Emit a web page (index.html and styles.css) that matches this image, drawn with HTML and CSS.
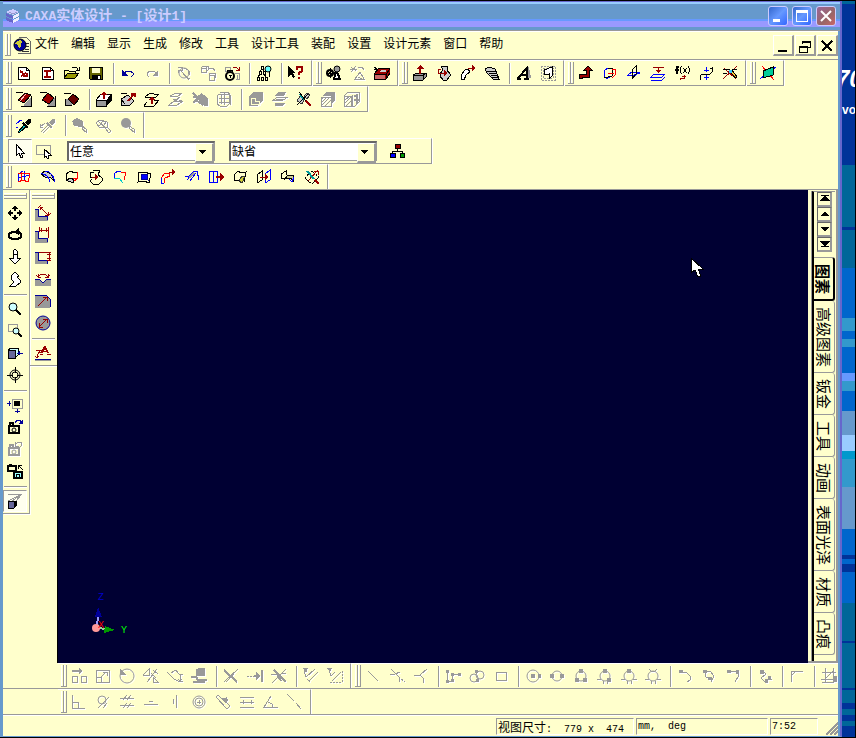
FILE: index.html
```html
<!DOCTYPE html>
<html lang="zh-CN">
<head>
<meta charset="utf-8">
<title>CAXA实体设计 - [设计1]</title>
<link rel="stylesheet" href="styles.css">
</head>
<body>
<div class="screen">
<main class="window">
  <header class="titlebar">
    <svg class="logo" viewBox="0 0 16 16"><path fill="#ccf" d="M1 4l7-3 6 3-6 3z"/><path fill="#66c" d="M1 5l7 3v3L1 8zM1 9l7 3v3l-7-3z"/><path fill="#eef" d="M8 8l6-3v3l-6 3zM8 12l6-3v3l-6 3z"/><path stroke="#99c" d="M4 4l4 2 4-2"/></svg>
    <h1>CAXA<span class="zh">实体设计</span> - [<span class="zh">设计</span>1]</h1>
    <button class="cap" aria-label="最小化"><svg viewBox="0 0 18 18"><path class="w" d="M4 12h7v3H4z"/></svg></button>
    <button class="cap" aria-label="最大化"><svg viewBox="0 0 18 18"><path class="w" fill-rule="evenodd" d="M3 3h12v12H3zM4 6v8h10V6z"/></svg></button>
    <button class="cap close" aria-label="关闭"><svg viewBox="0 0 18 18"><path class="wx" d="M4 4l10 10M14 4L4 14"/></svg></button>
  </header>

  <nav class="menubar">
    <i class="grip"></i>
    <svg class="docicon" viewBox="0 0 18 18"><path fill="#ffc" stroke="#666" d="M6 1h7l4 4v12H5"/><path stroke="#333" d="M12 7h4M13 10h3M12 13h4M9 15h7"/><circle cx="7" cy="9" r="6" fill="#009" stroke="#000"/><path fill="#cc3" d="M3 6l4-2 3 2-2 1v3l-2 3-1-4-3-1z"/></svg>
    <a href="#">文件</a><a href="#">编辑</a><a href="#">显示</a><a href="#">生成</a><a href="#">修改</a><a href="#">工具</a><a href="#">设计工具</a><a href="#">装配</a><a href="#">设置</a><a href="#">设计元素</a><a href="#">窗口</a><a href="#">帮助</a>
    <span class="mdi">
      <button aria-label="最小化文档"><svg viewBox="0 0 16 16"><path class="k2" d="M3 14h9"/></svg></button>
      <button aria-label="还原文档"><svg viewBox="0 0 16 16"><path class="k" d="M5 7V4h8v6h-3M5 5h8M2 9h8v6H2zM2 10h8"/></svg></button>
      <button aria-label="关闭文档"><svg viewBox="0 0 16 16"><path class="k2" d="M3 4l10 10M13 4L3 14"/></svg></button>
    </span>
  </nav>

  <div class="row">
    <div class="bar"><i class="grip"></i>
      <button aria-label="新建设计"><svg viewBox="0 0 16 16"><path fill="#fff" stroke="#000" d="M2 2h8l3 3v9H2z"/><path class="k" d="M10 2v3h3"/><path class="r2" d="M4 6l3 2M5 11l5-3M7 11h4V8"/></svg></button>
      <button aria-label="新建图纸"><svg viewBox="0 0 16 16"><path fill="#fff" stroke="#000" d="M2 2h8l3 3v9H2z"/><path class="k" d="M10 2v3h3"/><path class="r2" d="M4 6h7M4 12h7M7 6v6"/></svg></button>
      <button aria-label="打开"><svg viewBox="0 0 16 16"><path fill="#ff9" stroke="#000" d="M0 13V5h4l1 1h6v3"/><path fill="#990" stroke="#000" d="M0 13l4-5h11l-4 5z"/><path class="k" d="M8 3l2-1 3 1 1 2M12 5h3V2"/></svg></button>
      <button aria-label="保存"><svg viewBox="0 0 16 16"><path fill="#660" stroke="#000" d="M1 2h13v12H2l-1-1z"/><path fill="#ffc" d="M4 3h8v5H4z"/><path fill="#000" d="M4 10h9v4H4z"/><path fill="#fff" d="M10 11h2v3h-2z"/></svg></button>
      <i class="sep"></i>
      <button aria-label="撤消"><svg viewBox="0 0 16 16"><path class="b" d="M4 9l2-3h4l3 2v2l-2 2"/><path fill="#009" d="M2 5v6h6z"/></svg></button>
      <button class="off" aria-label="重做"><svg viewBox="0 0 16 16"><path class="g" d="M12 8l-2-2H6L3 8v2l2 2"/><path class="gf" d="M14 5v6H8z"/></svg></button>
      <i class="sep"></i>
      <button class="off" aria-label="更新"><svg viewBox="0 0 16 16"><path class="g" d="M2 2h4v3H2v3M8 3l4 2 1 4M13 6v4M5 6l8 9M10 12l4 2"/><circle class="g" cx="8" cy="8" r="5"/></svg></button>
      <button class="off" aria-label="复制零件"><svg viewBox="0 0 16 16"><path class="g" d="M1 3h5v4H1zM1 3l2-2h5l-2 2M6 7l2-2V1M9 10h5v5H9zM9 10l1-2h5v5M9 3h4l2 3"/></svg></button>
      <button aria-label="锁定零件"><svg viewBox="0 0 16 16"><path class="g" d="M1 2h5v4H1zM11 8h4v6h-3M13 10v4"/><path class="r" d="M9 2h3l3 3M12 5h3V2"/><circle cx="6" cy="11" r="4" fill="#ffc" stroke="#000" stroke-width="2"/><path class="k" d="M3 7V5h5v2M5 10h3M6 10v3"/></svg></button>
      <i class="sep"></i>
      <button aria-label="设计树"><svg viewBox="0 0 16 16"><path class="k" d="M5 1h2v3H5zM3 6h2v3H3zM7 6h2v3H7zM1 12h2v3H1zM5 12h2v3H5zM9 12h2v3H9zM6 4L4 6M6 4l2 2M4 9l-2 3M8 9l2 3M13 7l1 5"/><circle cx="12" cy="4" r="3" fill="#6ff" stroke="#000"/></svg></button>
      <i class="sep"></i>
      <button aria-label="帮助指针"><svg viewBox="0 0 16 16"><path fill="#000" d="M0 1v11l3-3 2 4 2-1-2-4h3z"/><path class="r2" d="M9 5V2h5v4l-3 2v2M11 12v2"/></svg></button>
    </div>
    <div class="bar"><i class="grip"></i>
      <button aria-label="装配"><svg viewBox="0 0 16 16"><circle cx="4" cy="8" r="3" class="k2"/><path class="k" d="M4 3v10M0 8h9M1 5l6 6M7 5l-6 6"/><path fill="#fff" stroke="#000" stroke-width="2" d="M10 5l4 9H8z"/><circle cx="11" cy="4" r="3" fill="#999" stroke="#000"/></svg></button>
      <button class="off" aria-label="解除装配"><svg viewBox="0 0 16 16"><path class="g" d="M1 2l5 4M6 1L1 7M0 4h7M8 3l4-1 2 3M10 7l4 7H5zM8 12l6 3"/></svg></button>
      <button aria-label="零件库"><svg viewBox="0 0 16 16"><path fill="#900" stroke="#000" d="M0 9l5-6h11v5l-4 6H0z"/><path fill="#c66" d="M1 10h10v4H1z"/><path class="k" d="M0 9h12v5M12 9l4-5M0 2l3 2-3 1"/><path fill="#ccc" d="M7 5h5v2H6z"/></svg></button>
    </div>
    <div class="bar"><i class="grip"></i>
      <button aria-label="拉伸"><svg viewBox="0 0 16 16"><path fill="#999" stroke="#000" d="M1 10l4-2h9v4l-3 3H1z"/><path class="k" d="M1 10h10v5M11 10l3-2"/><path class="r2" d="M8 9V3"/><path fill="#900" d="M8 0l4 4H4z"/></svg></button>
      <button aria-label="旋转"><svg viewBox="0 0 16 16"><path fill="#ccc" stroke="#000" d="M5 1h7l-1 4 3 4v2l-3 4H7l-3-4V9l3-4z"/><path class="r" d="M5 4H2v4h7"/><path fill="#900" d="M8 5l4 3-4 3z"/></svg></button>
      <button aria-label="扫描"><svg viewBox="0 0 16 16"><path fill="#fff" stroke="#000" d="M1 14v-4l4-5 3-1 2 3-4 3-2 5z"/><path class="r" d="M8 3h6"/><path fill="#900" d="M12 0l4 3-4 3z"/></svg></button>
      <button aria-label="放样"><svg viewBox="0 0 16 16"><path fill="#ccc" stroke="#000" d="M1 4l4-2 6 2 4 10H9L3 8z"/><path class="k" d="M3 6h9M5 8h8M7 10h7M8 12h6"/></svg></button>
      <i class="sep"></i>
      <button aria-label="文字"><svg viewBox="0 0 16 16"><path fill="#999" d="M11 2h2l2 11h-4z"/><path class="k2" d="M2 13l9-10v10M5 10h6M1 14h4M8 14h5"/></svg></button>
      <button aria-label="零件板"><svg viewBox="0 0 16 16"><path class="g dash" d="M1 1h14v14H1zM3 3h10v10H3z"/><path fill="#fff" stroke="#000" d="M4 5l8-3v9l-3 3V9l-5 1z"/></svg></button>
    </div>
    <div class="bar"><i class="grip"></i>
      <button aria-label="三维曲线"><svg viewBox="0 0 16 16"><path stroke="#000" stroke-width="4" d="M3 14v-3h7V4"/><path fill="#000" d="M10 0l5 6H5z"/><path class="r2" d="M3 13v-2h7V4"/><path fill="#900" d="M10 1l3 4H7z"/></svg></button>
      <button aria-label="曲面"><svg viewBox="0 0 16 16"><path class="n" d="M2 12V6l4-3M4 14l4-2"/><path class="k" d="M6 3h4v8l-4 1H2"/><path class="red" d="M10 4l4 1-1 5-3 3M6 8h6"/></svg></button>
      <button aria-label="基准面"><svg viewBox="0 0 16 16"><path class="n" d="M1 10h6M8 10l6-2M2 10l4-3h8l-4 3z"/><path class="k" d="M6 14V5l4-4v8z"/></svg></button>
      <button aria-label="等距面"><svg viewBox="0 0 16 16"><path class="r" d="M3 2h11M8 2v6M6 5h5M7 6h3"/><path class="n" d="M4 9h11l-3 3H1zM1 15h11l3-3"/></svg></button>
      <button aria-label="公式曲线"><svg viewBox="0 0 16 16"><path class="k2" d="M5 2H3v7M1 5h4"/><path class="k" d="M8 1L6 3v4l2 2M9 3l4 5M13 3L9 8M14 1l1 2v4l-1 2"/><path class="r" d="M6 15v-2h4v-3M8 11h4"/></svg></button>
      <button aria-label="桥接曲线"><svg viewBox="0 0 16 16"><path class="k" d="M2 15v-4l2-2h8l2-2V2M12 3h3"/><path class="n" d="M8 2v5M8 10v5M6 5h5M6 12h5"/></svg></button>
      <button aria-label="打断曲线"><svg viewBox="0 0 16 16"><path class="r" d="M15 1L1 14M2 3l12 11"/><path class="k" d="M1 4l7 1M1 9l4-1M10 4l5 1"/><path fill="#fc3" stroke="#000" d="M8 6l5 7 2-1-5-7z"/><path fill="#3cf" d="M7 5h3v3H7z"/></svg></button>
    </div>
    <div class="bar"><i class="grip"></i>
      <button aria-label="参考面"><svg viewBox="0 0 16 16"><path class="red" d="M2 1l12 14"/><path class="n" d="M0 14L16 2"/><path fill="#0c9" stroke="#000" d="M3 6l10-4v8L3 13z"/></svg></button>
    </div>
  </div>

  <div class="row">
    <div class="bar"><i class="grip"></i>
      <button aria-label="圆角过渡"><svg viewBox="0 0 16 16"><path fill="#999" d="M8 13l7-7v9H8z"/><path fill="#900" stroke="#000" d="M2 9l7-7 6 2-7 8z"/><path stroke="#fcc" d="M4 10l6-7"/><path class="k" d="M0 1h7M15 5v10H5"/></svg></button>
      <button aria-label="倒角"><svg viewBox="0 0 16 16"><path fill="#999" d="M8 13l7-7v9H8z"/><path fill="#900" stroke="#000" d="M2 9l6-7 6 5-5 6z"/><path class="k" d="M0 1h7M15 5v10H7"/></svg></button>
      <button aria-label="抽壳"><svg viewBox="0 0 16 16"><path fill="#999" d="M1 8h7v6H1z"/><path fill="#600" stroke="#000" d="M4 8l5-5 6 5-5 6z"/><path class="k" d="M0 2h7M1 8v6h7"/></svg></button>
      <i class="sep"></i>
      <button aria-label="面拔模"><svg viewBox="0 0 16 16"><path fill="#999" stroke="#000" d="M0 9h10v6H0z"/><path fill="#000" d="M10 9l6-5v5l-6 6"/><path fill="#fff" stroke="#000" d="M0 9l5-6h11l-5 6z"/><path class="r2" d="M8 8V2"/><path fill="#900" d="M8 0l3 4H5z"/></svg></button>
      <button aria-label="移动面"><svg viewBox="0 0 16 16"><path fill="#ccc" stroke="#000" d="M1 14V8l7-4 6 6-5 5zM1 8l4 5"/><path class="k" d="M1 2h6"/><path class="r2" d="M8 10l6-7M11 3h4v3"/></svg></button>
      <button aria-label="匹配面"><svg viewBox="0 0 16 16"><path class="k" d="M1 6l5-4 4 1h5l-4 4zM0 15h10l5-6h-5M0 15l3-4"/><path class="r2" d="M8 13V7"/><path fill="#900" d="M8 5l3 4H5z"/></svg></button>
      <button class="off" aria-label="等距"><svg viewBox="0 0 16 16"><path class="g" d="M2 5l6-3h6l-5 4zM1 14l5-4h9l-6 4zM8 9l4-3M9 11l5-2"/><path class="gf" d="M5 8h5l-3 4z"/></svg></button>
      <button class="off" aria-label="删除面"><svg viewBox="0 0 16 16"><path class="gf" d="M6 4h6l4 3v8h-4z"/><path class="g2" d="M1 2l12 12M1 12l9-9M4 9l7 5M1 6h8"/></svg></button>
      <button class="off" aria-label="编辑面"><svg viewBox="0 0 16 16"><path class="g" d="M3 3h10v10l-2 2H4l-3-2V5zM4 1h8l2 3v10M3 7h10M3 11h10M8 2v12M5 4v9"/></svg></button>
      <i class="sep"></i>
      <button class="off" aria-label="布尔并"><svg viewBox="0 0 16 16"><path class="gf" d="M1 5l4-4h10v8l-5 6H1z"/><path stroke="#ffc" d="M3 7h4v3h4v3H3z"/></svg></button>
      <button class="off" aria-label="分割"><svg viewBox="0 0 16 16"><path class="gf" d="M3 4l3-3h8l-2 4H3zM3 12h10l-3 3H3z"/><path class="g" d="M1 9h10l5-3H6zM4 8h9"/></svg></button>
      <button aria-label="截面"><svg viewBox="0 0 16 16"><path fill="#ccc" stroke="#333" d="M1 10l3-5 4 4-2 4zM8 5l3-3 3 2-3 4z"/><path stroke="#099" d="M3 3l5 6"/><path class="k" d="M3 1l7 9M1 14L12 3"/><path class="r2" d="M10 10l5 5"/></svg></button>
      <button class="off" aria-label="抽取"><svg viewBox="0 0 16 16"><path class="gf" d="M6 1h9v9l-4 3V5H2z"/><path class="g" d="M1 6h10v9H1zM1 9l3-3M1 12l6-6M1 15l9-9M5 15l6-6"/></svg></button>
      <button class="off" aria-label="镜像零件"><svg viewBox="0 0 16 16"><path class="g2" d="M10 5h4M10 9h5M13 3v10"/><path class="g" d="M0 5h7v10H0zM0 5l4-4h11v10l-4 4H8V4M1 9l5-4M1 12l6-6M2 15l5-5"/></svg></button>
    </div>
  </div>

  <div class="row">
    <div class="bar open"><i class="grip"></i>
      <button aria-label="提取属性"><svg viewBox="0 0 16 16"><path class="n" d="M0 6l5-4M3 2h3M0 9h2"/><path fill="#0cc" stroke="#000" d="M2 14l7-8 2 2-8 7z"/><path fill="#000" d="M9 4l4-3h2v3l-3 4z"/><path class="k2" d="M7 5l5 5"/></svg></button>
      <button class="off" aria-label="应用属性"><svg viewBox="0 0 16 16"><path class="gf" d="M9 4l4-3h2v3l-3 4z"/><path class="g2" d="M7 5l5 5"/><path class="g" d="M1 14l8-8M3 15l7-7M0 9l5-4M0 6v3h3"/></svg></button>
      <i class="sep"></i>
      <button class="off" aria-label="材质"><svg viewBox="0 0 16 16"><path class="gf" d="M0 3l5-3 6 3-1 6-8-1z"/><path class="g" d="M10 8l4 3v3l-4-3V6"/></svg></button>
      <button class="off" aria-label="贴图"><svg viewBox="0 0 16 16"><path class="g" d="M0 5l4-3 7 2 1 5-8 1zM3 4l7 6M7 3L3 8M10 4L7 9M11 9l4 4-2 2-4-5"/></svg></button>
      <button class="off" aria-label="颜色"><svg viewBox="0 0 16 16"><circle class="gf" cx="6" cy="5" r="5"/><path class="g" d="M9 8l5 3v3l-4-3z"/></svg></button>
    </div>
  </div>

  <div class="row">
    <div class="bar choices">
      <button class="down" aria-label="选择"><svg viewBox="0 0 16 16"><path fill="#fff" stroke="#000" d="M4 1v12l3-3 2 5 2-1-2-4h3z"/></svg></button>
      <button aria-label="框选"><svg viewBox="0 0 16 16"><path class="g" d="M0 2h14v9H0z"/><path fill="#fff" stroke="#000" d="M8 6v9l2-2 2 4 1-1-1-4h3z"/></svg></button>
      <span class="combo"><select aria-label="选择类型"><option>任意</option></select></span>
      <span class="combo second"><select aria-label="配置"><option>缺省</option></select></span>
      <button aria-label="结构"><svg viewBox="0 0 16 16"><path class="k" d="M8 5v3M3 11V8h10v3"/><path fill="#900" stroke="#000" d="M6 1h5v4H6z"/><path fill="#00f" stroke="#000" d="M1 10h5v4H1z"/><path fill="#090" stroke="#000" d="M11 10h4v4h-4z"/></svg></button>
    </div>
  </div>

  <div class="row last">
    <div class="bar"><i class="grip"></i>
      <button aria-label="网格面"><svg viewBox="0 0 16 16"><path class="n" d="M2 13V5l5-3M8 2v10M2 9l12-3"/><path class="red" d="M2 5l6-1 6 1-2 8-5-2-5 2M5 3v9"/></svg></button>
      <button aria-label="放样面"><svg viewBox="0 0 16 16"><path fill="#ccc" stroke="#000" d="M1 5l4-3 6 3 4 8-4-4-6-1z"/><path class="n" d="M1 5c4-1 8 3 9 8M5 2c5 0 9 5 10 11"/></svg></button>
      <button aria-label="直纹面"><svg viewBox="0 0 16 16"><path class="k" d="M2 11V5l5-3 3 2 4-1"/><path class="red" d="M14 3l-1 7-4 3M9 10l4-1"/><path fill="#ccc" stroke="#000" d="M2 11l5-2 3 2-1 3z"/></svg></button>
      <button aria-label="旋转面"><svg viewBox="0 0 16 16"><path class="k" d="M5 1h7l-2 5 4 3v3l-3 3H5l-3-3 2-2M2 3v5h4M2 3h4"/><path class="r" d="M4 8h5"/><path fill="#900" d="M7 5l4 3-4 3z"/></svg></button>
      <button aria-label="边界面"><svg viewBox="0 0 16 16"><path class="n" d="M2 9V5l4-3h3"/><path class="red" d="M9 3h5l-2 8"/><path stroke="#0cc" d="M2 10l5-1 4 5"/></svg></button>
      <button aria-label="填充面"><svg viewBox="0 0 16 16"><path class="k" d="M3 3h5l7 2-2 9-5-2-6 1z"/><path fill="#00f" stroke="#009" d="M5 6l6-1 1 6-5-1-2 1z"/></svg></button>
      <button aria-label="导动面"><svg viewBox="0 0 16 16"><path class="red" d="M1 9l4-5h4l1 3-5 2-1 5"/><path class="n" d="M1 9v5h3"/><path class="r" d="M9 3h5"/><path fill="#900" d="M12 0l4 3-4 3z"/></svg></button>
      <button aria-label="平行面"><svg viewBox="0 0 16 16"><path class="n" d="M1 7h4l5-5h3l2 9M3 11l7-8M6 12l6-8"/><path class="g2" d="M5 9l5-5"/></svg></button>
      <button aria-label="延伸面"><svg viewBox="0 0 16 16"><path class="n" d="M1 2h8v11H1zM5 2v11"/><path class="r2" d="M8 8h5"/><path fill="#900" d="M12 4l4 4-4 4z"/></svg></button>
      <button aria-label="裁剪面"><svg viewBox="0 0 16 16"><path class="k" d="M7 12l-5-1V6l4-4 3 2 5-1-2 10"/><path fill="#cc3" stroke="#333" d="M7 12l3-5h3l-3 7z"/></svg></button>
      <button aria-label="缝合面"><svg viewBox="0 0 16 16"><path class="k" d="M1 14V6l5-4v9z"/><path class="n" d="M9 14V5l5-4v10z"/><path class="r" d="M4 8h7"/><path fill="#900" d="M9 5l4 3-4 3z"/></svg></button>
      <button aria-label="过渡面"><svg viewBox="0 0 16 16"><path class="k" d="M5 10l-4-1V5l5-3v4"/><path fill="#cc9" stroke="#000" d="M5 10l3-4 6 1-1 6-2-4z"/><path class="n" d="M9 10l3 3 2-5"/></svg></button>
      <button aria-label="还原裁剪"><svg viewBox="0 0 16 16"><path class="k dash" d="M1 9l6-7 8 6-7 7z"/><path class="r" d="M14 1L4 12M10 2h4v4"/><path stroke="#099" stroke-width="2" d="M3 2l7 8"/><path class="r2" d="M11 11l4 4"/></svg></button>
    </div>
  </div>

  <div class="work">
    <div class="side">
      <div class="vbar"><i class="vgrip"></i>
        <button aria-label="平移"><svg viewBox="0 0 16 16"><path class="k2" d="M8 2v4M8 10v4M2 8h4M10 8h4"/><path fill="#000" d="M8 0l3 4H5zM8 16l3-4H5zM0 8l4-3v6zM16 8l-4-3v6z"/></svg></button>
        <button aria-label="旋转视图"><svg viewBox="0 0 16 16"><path class="k2" d="M9 5H5L2 7v3l3 2h6l3-2V7l-2-2"/><path fill="#000" d="M12 1v7L7 5z"/></svg></button>
        <button aria-label="前后移动"><svg viewBox="0 0 16 16"><path fill="#fff" stroke="#000" d="M6 5V2l2-2 2 2v3zM6 5h4v4h4l-6 6-6-6h4z"/></svg></button>
        <button aria-label="漫游"><svg viewBox="0 0 16 16"><path fill="#fff" stroke="#000" d="M4 5l4-4 4 4-2 1 3 3v3l-4 3H3l4-4-3-3V6z"/></svg></button>
        <i class="vsep"></i>
        <button aria-label="缩放"><svg viewBox="0 0 16 16"><circle cx="6" cy="6" r="4" fill="#cff" stroke="#000"/><path class="k2" d="M9 9l5 5"/></svg></button>
        <button aria-label="窗口缩放"><svg viewBox="0 0 16 16"><path class="g" d="M1 1h9v7H1z"/><circle cx="9" cy="8" r="3" fill="#cff" stroke="#000"/><path class="k2" d="M11 10l4 4"/></svg></button>
        <button aria-label="指定面"><svg viewBox="0 0 16 16"><path fill="#cff" stroke="#000" d="M1 5l3-2h7v7l-3 3H1z"/><path fill="#669" stroke="#000" d="M1 5h7v8H1z"/><path class="b" d="M10 8h6"/><path fill="#009" d="M10 8l3-3v6z"/></svg></button>
        <button aria-label="目标"><svg viewBox="0 0 16 16"><circle class="k" cx="8" cy="8" r="5"/><circle class="k" cx="8" cy="8" r="3"/><path class="k" d="M8 0v6M8 10v6M0 8h6M10 8h6"/></svg></button>
        <i class="vsep"></i>
        <button aria-label="全部显示"><svg viewBox="0 0 16 16"><path class="g" d="M5 2h10v9H5z"/><path fill="#000" d="M7 4h6v5H7z"/><path class="b" d="M0 6h4M2 4v5M10 12v4M8 14h5"/></svg></button>
        <button aria-label="保存视向"><svg viewBox="0 0 16 16"><path class="k2" d="M2 7h10v7H2zM3 7V4h3v3"/><circle class="k" cx="7" cy="11" r="2"/><path class="b" d="M8 4l2-3h3l2 3"/><path fill="#009" d="M11 5h5V1z"/></svg></button>
        <button class="off" aria-label="恢复视向"><svg viewBox="0 0 16 16"><path class="g2" d="M2 7h10v7H2zM3 7V4h3v3"/><circle class="g" cx="7" cy="11" r="2"/><path class="g" d="M8 4l3-3h3l1 3-2 2M8 1v4h4"/></svg></button>
        <button aria-label="相机"><svg viewBox="0 0 16 16"><path class="k2" d="M1 3h8v5H1z"/><path class="k" d="M2 1h3M11 2l5 5M11 2h4M11 2v4"/><path fill="#9ff" stroke="#000" stroke-width="2" d="M7 9h8v6H7z"/><path class="k" d="M9 11h3v3H9z"/></svg></button>
        <i class="vsep"></i>
        <button class="down" aria-label="透视"><svg viewBox="0 0 16 16"><path class="g" d="M1 1h14L1 8M15 1L5 8M15 1L9 8"/><path fill="#669" stroke="#000" d="M1 9l2-1h6v5l-2 2H1z"/><path class="k2" d="M8 9v5"/></svg></button>
      </div>
      <div class="vbar"><i class="vgrip"></i>
        <button aria-label="标注长度"><svg viewBox="0 0 16 16"><path class="gf" d="M0 4h4v7h9v5H0z"/><path class="b" d="M0 4h3v7h9v4"/><path class="r" d="M5 2l8 8M5 5V2h3M13 7v3h-3M6 0L3 3M16 8l-3 3"/></svg></button>
        <button aria-label="水平标注"><svg viewBox="0 0 16 16"><path class="gf" d="M0 4h4v7h9v5H0z"/><path class="b" d="M0 4h3v7h9v4"/><path class="r" d="M4 0v5M13 0v11M4 3h9M6 1v4M11 1v4"/></svg></button>
        <button aria-label="竖直标注"><svg viewBox="0 0 16 16"><path class="gf" d="M0 3h4v8h9v4H0z"/><path class="b" d="M0 3h3v8h9v4"/><path class="r" d="M4 3h12M12 11h4M14 3v8M12 5h4M12 9h4"/></svg></button>
        <button aria-label="角度标注"><svg viewBox="0 0 16 16"><path class="gf" d="M0 8h4l4 4 4-4h4v7H0z"/><path class="b" d="M0 8h4l4 4 4-4h4"/><path class="r" d="M3 6l3-3h4l3 3M1 4l3 3M15 4l-3 3M3 3v3h3M13 3v3h-3"/></svg></button>
        <button aria-label="半径标注"><svg viewBox="0 0 16 16"><path class="gf" d="M0 2h11l4 4v9H0z"/><path class="b" d="M0 2h11l4 4v8"/><path class="r" d="M3 13l9-9M8 4h4v4"/></svg></button>
        <button aria-label="直径标注"><svg viewBox="0 0 16 16"><circle cx="8" cy="8" r="7" fill="#999" stroke="#009"/><path class="r" d="M4 12l8-8M8 4h4v4M4 8v4h4"/></svg></button>
        <i class="vsep"></i>
        <button aria-label="文字标注"><svg viewBox="0 0 16 16"><path class="r2" d="M6 8l4-6 3 6"/><path class="r" d="M8 6h5M5 9h3M12 9h4M1 5h5l-4 5v3M0 11l2 2 2-2"/><path class="gf" d="M0 14h16v2H0z"/><path class="b" d="M0 14h16"/></svg></button>
      </div>
    </div>
    <section class="canvas" aria-label="设计环境">
      <svg class="axis" viewBox="0 0 40 44"><path fill="#009" d="M6 12l4 10H3z"/><path stroke="#99f" stroke-width="2" d="M6 22L5 31"/><path stroke="#9c9" stroke-width="2" d="M6 33l8 1"/><path fill="#090" d="M13 31l10 4-11 3z"/><circle cx="4" cy="33" r="4" fill="#f99"/></svg>
      <span class="ax z">Z</span><span class="ax x">X</span><span class="ax y">Y</span>
      <svg class="pointer" viewBox="0 0 12 20"><path fill="#fff" stroke="#000" d="M0 0v15l4-3 3 7 3-1-3-7h5z"/></svg>
    </section>
    <aside class="catalog">
      <div class="inner">
        <div class="nav">
          <button aria-label="首页"><svg viewBox="0 0 12 12"><path fill="#000" d="M2 2h8v1H7l4 5H1l4-5H2z"/></svg></button>
          <button aria-label="上翻"><svg viewBox="0 0 12 12"><path fill="#000" d="M6 3l4 5H2z"/></svg></button>
          <button aria-label="下翻"><svg viewBox="0 0 12 12"><path fill="#000" d="M6 9l4-5H2z"/></svg></button>
          <button aria-label="末页"><svg viewBox="0 0 12 12"><path fill="#000" d="M1 3h10L7 8h3v1H2V8h3z"/></svg></button>
        </div>
        <button class="tab on">图素</button>
        <button class="tab">高级图素</button>
        <button class="tab">钣金</button>
        <button class="tab">工具</button>
        <button class="tab">动画</button>
        <button class="tab">表面光泽</button>
        <button class="tab">材质</button>
        <button class="tab">凸痕</button>
      </div>
    </aside>
  </div>

  <div class="row sketch">
    <div class="bar"><i class="grip"></i>
      <button class="off" aria-label="移动"><svg viewBox="0 0 16 16"><path class="g" d="M1 8h5v6H1zM10 8h5v6h-5z"/><path class="g2" d="M1 3h8"/><path class="gf" d="M8 0l4 3-4 3z"/></svg></button>
      <button class="off" aria-label="比例"><svg viewBox="0 0 16 16"><path class="g" d="M1 2h13v12H1zM1 9h5v5M6 9l5-5M8 4h4v4"/></svg></button>
      <button class="off" aria-label="转动"><svg viewBox="0 0 16 16"><circle class="g" cx="8" cy="8" r="7"/><path class="gf" d="M1 1v6h6z"/></svg></button>
      <button class="off" aria-label="镜像"><svg viewBox="0 0 16 16"><path class="g" d="M0 7h6V1zM14 1L4 14M10 9v5h5zM8 5l5 5M10 2l5 4"/></svg></button>
      <button class="off" aria-label="偏移"><svg viewBox="0 0 16 16"><path class="g" d="M0 4l7 7 4 2h5M4 5l5-3 3 4h4M13 7v6M11 11l2 2 2-2"/></svg></button>
      <button class="off" aria-label="投影"><svg viewBox="0 0 16 16"><path class="gf" d="M5 1l3-1h6v8H5z"/><path class="g2" d="M0 9h5l2 3h9M2 14h12"/></svg></button>
      <i class="sep"></i>
      <button class="off" aria-label="裁剪"><svg viewBox="0 0 16 16"><path class="g2" d="M1 2l13 12"/><path class="g" d="M15 1L1 14M14 2L3 14"/></svg></button>
      <button class="off" aria-label="延伸"><svg viewBox="0 0 16 16"><path class="g2" d="M15 2v12M7 8h5"/><path class="gf" d="M9 4l4 4-4 4z"/><path class="g dash" d="M0 8h7"/></svg></button>
      <button class="off" aria-label="打断"><svg viewBox="0 0 16 16"><path class="g2" d="M3 2l12 12M6 6l4 7"/><path class="g" d="M15 1L1 15M0 6h6M10 5h5"/></svg></button>
      <i class="sep"></i>
      <button class="off" aria-label="显示曲线尺寸"><svg viewBox="0 0 16 16"><path class="g" d="M1 2l2 7M3 9l9-8M6 13l9-9M4 11l3 3"/><path class="gf" d="M0 0h5L3 5z"/></svg></button>
      <button class="off" aria-label="显示端点"><svg viewBox="0 0 16 16"><path class="g dash" d="M3 14h12V3"/><path class="g" d="M2 2l2 6M5 13l9-9M4 8l4-4"/><path class="gf" d="M0 0h5L3 4z"/></svg></button>
    </div>
    <div class="bar"><i class="grip"></i>
      <button class="off" aria-label="两点线"><svg viewBox="0 0 16 16"><path class="g" d="M3 3l10 10"/></svg></button>
      <button class="off" aria-label="切线"><svg viewBox="0 0 16 16"><path class="g" d="M2 1l8 8v5M1 6h5l5-2"/><path class="g dash" d="M10 9l6 5"/></svg></button>
      <button class="off" aria-label="法线"><svg viewBox="0 0 16 16"><path class="g" d="M1 7h6l7-6M7 7l3 3v5"/></svg></button>
      <i class="sep"></i>
      <button class="off" aria-label="连续直线"><svg viewBox="0 0 16 16"><path class="g" d="M2 3v10h5V6h7"/><path class="gf" d="M1 2h3v3H1zM1 12h3v3H1zM6 11h3v3H6zM6 5h3v3H6zM13 5h3v3h-3z"/></svg></button>
      <button class="off" aria-label="切线连续"><svg viewBox="0 0 16 16"><circle class="g" cx="5" cy="10" r="4"/><circle class="g" cx="11" cy="7" r="4"/><path class="gf" d="M6 2h3v3H6zM7 11h3v3H7z"/></svg></button>
      <button class="off" aria-label="矩形"><svg viewBox="0 0 16 16"><path class="g" d="M3 4h10v8H3z"/></svg></button>
      <i class="sep"></i>
      <button class="off" aria-label="圆心半径"><svg viewBox="0 0 16 16"><circle class="g" cx="8" cy="8" r="6"/><path class="gf" d="M6 6h4v4H6zM13 6h3v4h-3z"/></svg></button>
      <button class="off" aria-label="两点圆"><svg viewBox="0 0 16 16"><circle class="g" cx="8" cy="8" r="5"/><path class="gf" d="M1 6h4v4H1zM11 6h4v4h-4z"/></svg></button>
      <button class="off" aria-label="三点圆"><svg viewBox="0 0 16 16"><circle class="g" cx="8" cy="8" r="5"/><path class="gf" d="M6 1h4v4H6zM2 10h4v4H2zM10 10h4v4h-4z"/></svg></button>
      <button class="off" aria-label="一切点圆"><svg viewBox="0 0 16 16"><circle class="g" cx="8" cy="8" r="5"/><path class="g" d="M0 11h4M6 13v3M10 13v3"/><path class="gf" d="M6 1h4v4H6zM10 10h4v4h-4z"/></svg></button>
      <button class="off" aria-label="两切点圆"><svg viewBox="0 0 16 16"><circle class="g" cx="8" cy="8" r="5"/><path class="g" d="M0 11h4M12 11h4M6 13v3M10 13v3"/><path class="gf" d="M6 1h4v4H6z"/></svg></button>
      <button class="off" aria-label="三切点圆"><svg viewBox="0 0 16 16"><circle class="g" cx="8" cy="8" r="5"/><path class="g" d="M0 11h4M12 11h4M6 13v3M10 13v3M4 1l2 2h4l2-2"/></svg></button>
      <i class="sep"></i>
      <button class="off" aria-label="圆心弧"><svg viewBox="0 0 16 16"><path class="g" d="M4 4h5l4 4v4l-3 2"/><path class="gf" d="M2 2h4v3H2z"/></svg></button>
      <button class="off" aria-label="端点弧"><svg viewBox="0 0 16 16"><path class="g" d="M4 3h5l4 5-3 6M4 4l1 5 5 3"/><path class="gf" d="M2 2h4v3H2zM7 9h4v3H7z"/></svg></button>
      <button class="off" aria-label="三点弧"><svg viewBox="0 0 16 16"><path class="g" d="M4 3h9v6l-3 5"/><path class="gf" d="M2 2h4v3H2zM11 2h3v4h-3z"/></svg></button>
      <i class="sep"></i>
      <button class="off" aria-label="样条"><svg viewBox="0 0 16 16"><path class="g" d="M3 5l3-2 3 3-5 4 4 4 4-4 3 2"/><path class="gf" d="M3 2h4v4H3zM8 11h3v4H8zM11 8h3v4h-3z"/></svg></button>
      <i class="sep"></i>
      <button class="off" aria-label="圆角"><svg viewBox="0 0 16 16"><path class="g" d="M2 14V8l5-5h7M2 7V3h5"/></svg></button>
      <i class="sep"></i>
      <button class="off" aria-label="构造"><svg viewBox="0 0 16 16"><path class="g" d="M1 4h14M0 11h15M4 0v15M12 0v15M4 11l8-8M1 14h12"/><path class="gf" d="M12 8h4v6h-4z"/></svg></button>
    </div>
  </div>

  <div class="row sketch">
    <div class="bar"><i class="grip"></i>
      <button class="off" aria-label="垂直约束"><svg viewBox="0 0 16 16"><path class="g" d="M1 1v13h13M1 8h6v6"/></svg></button>
      <button class="off" aria-label="相切约束"><svg viewBox="0 0 16 16"><circle class="g" cx="7" cy="6" r="4"/><path class="g" d="M3 14L14 3M8 14l4-5"/></svg></button>
      <button class="off" aria-label="平行约束"><svg viewBox="0 0 16 16"><path class="g" d="M1 4h14M1 11h14M4 6l4-5M8 6l4-5M4 14l4-5M8 14l4-5"/></svg></button>
      <button class="off" aria-label="水平约束"><svg viewBox="0 0 16 16"><path class="g" d="M1 10h14M6 7h4"/></svg></button>
      <button class="off" aria-label="竖直约束"><svg viewBox="0 0 16 16"><path class="g" d="M9 1v13M6 5v5"/></svg></button>
      <button class="off" aria-label="同心约束"><svg viewBox="0 0 16 16"><circle class="g" cx="8" cy="8" r="6"/><circle class="g" cx="8" cy="8" r="4"/><path class="g" d="M6 8h4M8 6v4"/></svg></button>
      <button class="off" aria-label="尺寸约束"><svg viewBox="0 0 16 16"><path class="g" d="M1 3l2-2 12 11-3 3z"/><path class="gf" d="M6 5l6-2 1 4-3 2z"/></svg></button>
      <button class="off" aria-label="等长约束"><svg viewBox="0 0 16 16"><path class="g" d="M1 3h14M1 8h14M1 13h14M4 6v4M12 6v4"/></svg></button>
      <button class="off" aria-label="角度约束"><svg viewBox="0 0 16 16"><path class="g" d="M15 13H1L8 2M5 8l4 2 1 4"/></svg></button>
      <button class="off" aria-label="共线约束"><svg viewBox="0 0 16 16"><path class="g" d="M0 0l7 7M9 9l5 6"/></svg></button>
    </div>
  </div>

  <footer class="status">
    <span class="pane size"><span class="zh">视图尺寸</span>:  779 x  474</span>
    <span class="pane unit">mm,  deg</span>
    <span class="pane time">7:52</span>
    <svg class="resize" viewBox="0 0 14 14"><path stroke="#999" stroke-width="2" d="M2 14L14 2M6 14l8-8M10 14l4-4"/></svg>
  </footer>
</main>
<div class="desktop"><span class="big">70</span><span class="small">vo</span></div>
</div>
</body>
</html>
```
FILE: styles.css
```css
* { box-sizing: border-box; }

body {
  margin: 0;
  background: #000;
  color: #000;
  font: 12px/16px "Liberation Sans", "Noto Sans CJK SC", sans-serif;
}

button {
  display: block;
  flex: none;
  margin: 0;
  padding: 0;
  border: 0;
  background: none;
  color: inherit;
  font: inherit;
}

svg { display: block; fill: none; shape-rendering: crispEdges; }
circle { shape-rendering: auto; }

.screen { display: flex; height: 100vh; padding: 1px 1px 1px 0; }

.window {
  flex: 1;
  min-width: 0;
  display: flex;
  flex-direction: column;
  overflow: hidden;
  background: #ffc;
  border-left: 3px solid #69c;
  border-right: 2px solid #66c;
  border-bottom: 1px solid #69c;
  box-shadow: inset -2px 0 #69c;
  padding-right: 2px;
}

/* Icon strokes and fills */
.k, .k2 { stroke: #000; }
.r, .r2 { stroke: #900; }
.red { stroke: #f00; }
.g, .g2 { stroke: #999; }
.b { stroke: #009; }
.n { stroke: #00f; }
.k2, .r2, .g2 { stroke-width: 2; }
.gf { fill: #999; }
.w { fill: #fff; }
.wx { stroke: #fff; stroke-width: 2; shape-rendering: auto; }
.dash { stroke-dasharray: 2 1; }
.off svg { filter: drop-shadow(1px 1px 0 #fff); }

/* Title bar */
.titlebar {
  display: flex;
  align-items: center;
  height: 30px;
  flex: none;
  gap: 4px;
  margin-right: -2px;
  padding: 0 4px 0 2px;
  border-bottom: 1px solid #999;
  background: linear-gradient(#66c 1px, #9cf 1px 3px, #69c 3px 18px, #69f 18px 20px, #99f 20px 26px, #69c 26px);
}

.logo { width: 16px; height: 16px; }

.titlebar h1 {
  flex: 1;
  margin: 0;
  color: #ccf;
  font: bold 13px/18px "Liberation Mono", monospace;
}

.titlebar .zh { font: bold 14px/18px "Noto Sans CJK SC", sans-serif; }

.cap {
  width: 20px;
  height: 20px;
  border: 1px solid #ccf;
  border-radius: 3px;
  background: linear-gradient(135deg, #36c, #69f 50%, #36f);
}

.cap.close { background: linear-gradient(135deg, #969, #966 60%, #c66); }
.cap svg { width: 18px; height: 18px; }

/* Menu bar */
.menubar {
  display: flex;
  align-items: center;
  height: 29px;
  flex: none;
  padding: 0 0 1px 2px;
  border-top: 1px solid #fff;
  border-bottom: 1px solid #999;
}

.menubar a { margin-right: 12px; padding-bottom: 2px; color: #000; text-decoration: none; }
.docicon { width: 18px; height: 18px; margin: 0 4px 0 2px; }

.mdi { display: flex; gap: 1px; margin-left: auto; }

.mdi button {
  width: 21px;
  height: 21px;
  padding: 1px;
  border: 1px solid #fff;
  border-right: 2px solid #999;
  border-bottom: 2px solid #999;
}

.mdi svg { width: 16px; height: 16px; }

.grip {
  flex: none;
  width: 6px;
  height: 22px;
  border: 1px solid #999;
  border-width: 0 1px 1px 0;
  background: linear-gradient(90deg, #fff 1px, transparent 1px 2px, #999 2px 3px, #fff 3px 4px, transparent 4px);
}

/* Toolbars */
.row { display: flex; height: 26px; flex: none; }
.row.last { height: 25px; }

.bar {
  display: flex;
  align-items: center;
  padding: 0 3px;
  border-top: 1px solid #fff;
  border-right: 1px solid #999;
  border-bottom: 1px solid #999;
  box-shadow: 1px 0 #fff;
  margin-right: 1px;
}

.bar.open, .last .bar { border-bottom: 0; }
.bar button { width: 24px; height: 24px; padding: 4px; }
.bar svg { width: 16px; height: 16px; }

.sep {
  flex: none;
  width: 8px;
  height: 21px;
  background: linear-gradient(90deg, transparent 5px, #999 5px 6px, #fff 6px 7px, transparent 7px);
}

.bar.choices { width: 429px; padding-left: 5px; }

.bar .down, .vbar .down {
  border: 1px solid #999;
  border-right-color: #fff;
  border-bottom-color: #fff;
  background: #ffe;
}

.bar .down { padding: 3px; }

.combo {
  position: relative;
  flex: none;
  width: 148px;
  margin: 0 14px 0 11px;
}

.combo.second { margin: 0 8px 0 0; }

.combo select {
  display: block;
  width: 100%;
  height: 20px;
  padding: 0 1px;
  appearance: none;
  border: 1px solid;
  border-width: 2px 1px 1px 2px;
  border-color: #666 #999 #999 #666;
  border-radius: 0;
  background: #fff;
  color: #000;
  font: inherit;
}

.combo::after {
  content: "";
  position: absolute;
  top: 2px;
  right: 1px;
  width: 16px;
  height: 17px;
  border: 1px solid #fff;
  border-right: 2px solid #999;
  border-bottom: 2px solid #999;
  background: linear-gradient(#000, #000) 3px 6px / 7px 1px no-repeat, linear-gradient(#000, #000) 4px 7px / 5px 1px no-repeat, linear-gradient(#000, #000) 5px 8px / 3px 1px no-repeat, linear-gradient(#000, #000) 6px 9px / 1px 1px no-repeat, #ffc;
}

/* Work area */
.work { display: flex; flex: 1; min-height: 0; border-top: 1px solid #999; }
.side { display: flex; flex: none; align-items: flex-start; width: 54px; }

.vbar {
  width: 27px;
  border-right: 1px solid #999;
  border-bottom: 1px solid #999;
  box-shadow: 1px 1px #fff;
  padding-bottom: 1px;
}

.vbar + .vbar { border-right: 0; padding-left: 1px; }

.vgrip {
  display: block;
  height: 6px;
  margin: 3px 2px 3px 1px;
  border: 1px solid #999;
  border-width: 0 1px 1px 0;
  background: linear-gradient(#fff 1px, transparent 1px 2px, #999 2px 3px, #fff 3px 4px, transparent 4px);
}

.vbar button { width: 24px; height: 22px; padding: 3px 4px; }
.vbar .down { padding: 2px 3px; }
.vbar svg { width: 16px; height: 16px; }

.vsep {
  display: block;
  height: 8px;
  margin: 0 2px 0 1px;
  background: linear-gradient(transparent 4px, #999 4px 5px, #fff 5px 6px, transparent 6px);
}

.canvas {
  position: relative;
  flex: 1;
  overflow: hidden;
  border-left: 1px solid #000;
  background: #003;
}

.axis { position: absolute; left: 34px; bottom: 24px; width: 40px; height: 44px; }
.ax { position: absolute; font: 10px/12px "Liberation Mono", monospace; }
.ax.z { left: 40px; bottom: 59px; color: #00c; }
.ax.x { left: 40px; bottom: 31px; color: #f00; }
.ax.y { left: 63px; bottom: 26px; color: #0f0; }
.pointer { position: absolute; right: 14%; top: 68px; width: 12px; height: 20px; overflow: visible; }

.catalog {
  display: flex;
  flex: none;
  width: 30px;
  padding: 1px 0 0 4px;
  border-right: 2px solid #999;
  border-bottom: 2px solid #999;
}

.inner {
  display: flex;
  flex-direction: column;
  width: 23px;
  border-top: 1px solid #999;
  border-left: 2px solid #000;
  box-shadow: -1px 0 #999;
  overflow: hidden;
}

.nav { padding: 0 0 5px 3px; }

.nav button {
  width: 15px;
  height: 15px;
  padding-left: 1px;
  border: 1px solid #666;
  border-right: 2px solid #999;
  border-bottom: 2px solid #999;
}

.nav svg { width: 12px; height: 12px; }

.tab {
  width: 21px;
  padding: 6px 0 5px;
  border-right: 1px solid #999;
  border-bottom: 1px solid #999;
  border-radius: 0 3px 3px 0;
  writing-mode: vertical-rl;
  text-orientation: sideways;
  text-align: left;
  font: 15px/19px "Noto Sans CJK SC", sans-serif;
}

.tab.on {
  border-top: 1px solid #999;
  border-right: 2px solid #000;
  border-bottom: 2px solid #000;
  font-weight: bold;
}

/* Sketch toolbars and status bar */
.sketch { padding-left: 55px; overflow: hidden; border-bottom: 1px solid #999; }
.sketch .bar { border-bottom: 0; }

.status {
  display: flex;
  flex: none;
  justify-content: flex-end;
  gap: 2px;
  height: 21px;
  padding: 2px 0 1px;
  border-top: 1px solid #fff;
  font: 10px/15px "Liberation Mono", monospace;
}

.pane {
  padding-left: 1px;
  border: 1px solid #999;
  border-right-color: #fff;
  border-bottom-color: #fff;
  white-space: pre;
}

.pane .zh { font: 12px/15px "Noto Sans CJK SC", sans-serif; }
.size { width: 138px; }
.unit { width: 132px; }
.time { width: 48px; }
.resize { width: 14px; height: 14px; margin: 3px 0 0 4px; }

/* Desktop behind the window */
.desktop {
  position: relative;
  flex: none;
  width: 13px;
  overflow: hidden;
  color: #fff;
  background: linear-gradient(#069 3px, #039 3px 164px, #069 164px 226px, #039 226px 229px, #069 229px 267px, #06c 267px 317px, #39c 317px 330px, #06c 330px 338px, #39c 338px 346px, #06c 346px 372px, #69f 372px 380px, #39c 380px 390px, #06c 390px 410px, #69c 410px 434px, #9cf 434px 450px, #09c 450px 458px, #39c 458px 486px, #69c 486px 528px, #06c 528px 554px, #039 554px 558px, #06c 558px 563px, #039 563px 571px, #06c 571px 602px, #069 602px 640px, #039 640px 642px, #069 642px 687px, #039 687px 689px, #069 689px 702px, #039 702px 708px, #069 708px 714px, #039 714px 720px, #069 720px 725px, #039 725px);
}

.big, .small { position: absolute; left: 0; font-family: "Liberation Sans", sans-serif; font-weight: bold; }
.big { top: 66px; left: -6px; font-size: 24px; line-height: 24px; font-style: italic; }
.small { top: 102px; font-size: 12px; line-height: 14px; }
```
